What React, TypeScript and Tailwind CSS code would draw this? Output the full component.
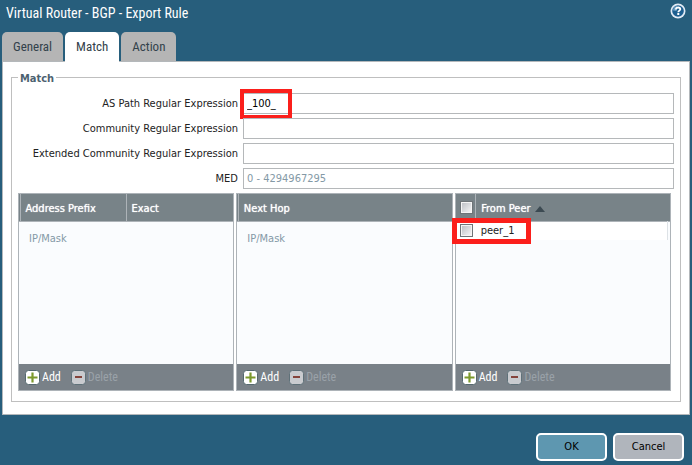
import { ReactNode } from "react";

const fields = [
  { id: "as-path", label: "AS Path Regular Expression", value: "_100_", marked: true },
  { id: "community", label: "Community Regular Expression", value: "" },
  { id: "ext-community", label: "Extended Community Regular Expression", value: "" },
  { id: "med", label: "MED", value: "", placeholder: "0 - 4294967295" },
];

const tabs = ["General", "Match", "Action"];

const narrow = "font-['Roboto_Condensed',Roboto,sans-serif]";

function HelpIcon() {
  return (
    <svg width="16" height="16" viewBox="0 0 16 16" aria-hidden="true">
      <circle cx="8" cy="8" r="7.5" fill="#e3ebf5" />
      <circle cx="8" cy="8" r="5.8" fill="#1d5f90" />
      <path d="M3 7.5a5 5 0 0 1 4-4.5l-.5 5z" fill="#6fa0c4" />
      <path
        d="M5.9 6.5c0-1.400 1-2 2.200-2s2.200.6 2.200 1.800c0 1.300-2 1.400-2 2.900"
        fill="none"
        stroke="#fff"
        strokeWidth="1.8"
      />
      <rect x="7.3" y="10" width="2" height="2" fill="#fff" />
    </svg>
  );
}

function AddIcon() {
  return (
    <svg width="15" height="15" viewBox="0 0 15 15" aria-hidden="true">
      <rect x="0.5" y="0.5" width="14" height="14" rx="3" fill="#fff" stroke="#55696f" />
      <path d="M7.5 2.5v10M2.5 7.5h10" stroke="#7d9a2d" strokeWidth="2.2" />
    </svg>
  );
}

function DeleteIcon() {
  return (
    <svg width="15" height="15" viewBox="0 0 15 15" aria-hidden="true">
      <rect x="0.5" y="0.5" width="14" height="14" rx="3" fill="#c9cbcf" stroke="#5f7179" />
      <path d="M4 7h7" stroke="#85443c" strokeWidth="2" />
    </svg>
  );
}

function Check({ label }: { label: string }) {
  return (
    <input
      type="checkbox"
      aria-label={label}
      className="block size-[13px] appearance-none border border-[#6e7478] bg-linear-to-br from-[#b9bcc2] to-[#fafafa] shadow-[inset_0_0_0_1px_#f4f4f4]"
    />
  );
}

function Grid({ children }: { children: ReactNode }) {
  return (
    <div className="flex h-[198px] min-w-0 flex-1 flex-col border border-[#adb3b8] bg-[#fafcfe]">
      <div className="flex-1">{children}</div>
      <div className={`flex h-[26px] items-center gap-2.5 bg-[#798188] pl-1.5 text-[12px] ${narrow}`}>
        <button type="button" className="flex items-center gap-0.5 text-white">
          <AddIcon />
          Add
        </button>
        <button type="button" disabled className="flex items-center gap-0.5 text-[#9aa1a8]">
          <DeleteIcon />
          Delete
        </button>
      </div>
    </div>
  );
}

const headRow = "h-[27px] border-b border-[#adb3b8] bg-[#788388] text-white";
const headCell = "border-l border-[#adb3b8] pl-[5px] pt-1 text-left font-normal [text-shadow:0_0_1px_#fff]";

export default function App() {
  return (
    <div className="flex min-h-screen flex-col bg-[#275e7c] px-0.5 font-['DejaVu_Sans_Condensed','DejaVu_Sans',sans-serif] text-[11px] leading-[14px] text-[#222]">
      <header className="flex h-8 items-start justify-between pl-1 pr-1 pt-[3px]">
        <h1 className={`text-[14px] leading-5 text-white ${narrow}`}>
          Virtual Router - BGP - Export Rule
        </h1>
        <button type="button" aria-label="Help">
          <HelpIcon />
        </button>
      </header>

      <div role="tablist" className={`flex gap-0.5 text-[13px] ${narrow}`}>
        {tabs.map((tab) => (
          <button
            key={tab}
            type="button"
            role="tab"
            aria-selected={tab === "Match"}
            className={
              tab === "Match"
                ? "z-10 -mb-px h-[30px] rounded-t-[5px] bg-white px-[11px] text-[#33424b]"
                : "h-[29px] rounded-t-[5px] bg-[#b5b5b5] px-[11px] text-[#33424b]"
            }
          >
            {tab}
          </button>
        ))}
      </div>

      <main className="border border-[#b4b8bb] bg-white px-2 pb-3 pt-1.5">
        <fieldset className="min-w-0 border border-[#bfbfbf] px-1.5 pb-2.5 pt-[7px]">
          <legend className="px-0.5 pt-1 font-bold text-[#4c6270]">Match</legend>
          <div className="flex flex-col gap-1">
            {fields.map((field) => (
              <div key={field.id} className="flex items-center gap-[5px]">
                <label htmlFor={field.id} className="w-[220px] shrink-0 text-right">
                  {field.label}
                </label>
                <div className="relative flex-1">
                  <input
                    id={field.id}
                    type="text"
                    defaultValue={field.value}
                    placeholder={field.placeholder}
                    className="block h-[21px] w-full border border-[#b5b8ba] bg-white px-[3px] text-black placeholder:text-[#8499a6]"
                  />
                  {field.marked && (
                    <span className="pointer-events-none absolute -left-[3px] -top-1 h-[30px] w-[52px] border-4 border-[#fb1f1b]" />
                  )}
                </div>
              </div>
            ))}
          </div>

          <div className="mr-[3px] mt-1 flex gap-0.5">
            <Grid>
              <table className="w-full table-fixed border-collapse">
                <thead>
                  <tr className={headRow}>
                    <th className="w-px p-0" />
                    <th className={`${headCell} w-[106px]`}>Address Prefix</th>
                    <th className={headCell}>Exact</th>
                  </tr>
                </thead>
                <tbody>
                  <tr className="h-[35px] text-[#8499a6]">
                    <td />
                    <td className="pl-[9px]">IP/Mask</td>
                    <td />
                  </tr>
                </tbody>
              </table>
            </Grid>
            <Grid>
              <table className="w-full table-fixed border-collapse">
                <thead>
                  <tr className={headRow}>
                    <th className="w-px p-0" />
                    <th className={headCell}>Next Hop</th>
                  </tr>
                </thead>
                <tbody>
                  <tr className="h-[35px] text-[#8499a6]">
                    <td />
                    <td className="pl-[9px]">IP/Mask</td>
                  </tr>
                </tbody>
              </table>
            </Grid>
            <Grid>
              <div className="relative">
                <table className="w-full table-fixed border-collapse">
                  <thead>
                    <tr className={headRow}>
                      <th className="w-5 pl-1">
                        <Check label="Select all peers" />
                      </th>
                      <th className={headCell}>
                        <span className="flex items-center gap-1">
                          From Peer
                          <svg width="10" height="6" viewBox="0 0 10 6" aria-hidden="true">
                            <path d="M0 6L5 0l5 6z" fill="#3c4a52" />
                          </svg>
                        </span>
                      </th>
                      <th className="w-0.5 p-0" />
                    </tr>
                  </thead>
                  <tbody>
                    <tr className="h-[19px]">
                      <td className="bg-white pl-1">
                        <Check label="Select peer_1" />
                      </td>
                      <td className="border-r border-[#dde2e6] bg-white pl-[5px]">peer_1</td>
                      <td />
                    </tr>
                  </tbody>
                </table>
                <span className="pointer-events-none absolute -left-1 top-6 h-[26px] w-[79px] border-[5px] border-[#fb1f1b]" />
              </div>
            </Grid>
          </div>
        </fieldset>
      </main>

      <footer className="flex justify-end gap-1.5 pr-1.5 pt-[18px]">
        <button
          type="button"
          className="h-7 w-[71px] rounded-[5px] border-2 border-white bg-[#5e97b0] text-black"
        >
          OK
        </button>
        <button
          type="button"
          className="h-7 w-[71px] rounded-[5px] border-2 border-white bg-[#b0b5bc] text-black"
        >
          Cancel
        </button>
      </footer>
    </div>
  );
}
